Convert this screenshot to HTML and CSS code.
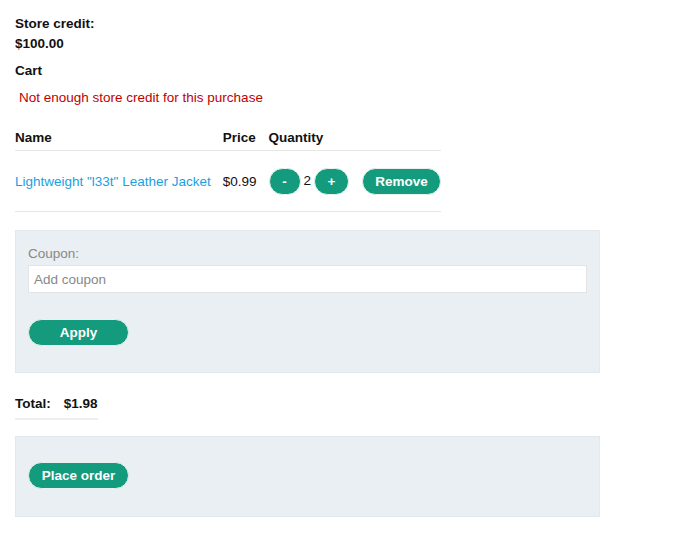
FILE: index.html
```html
<!DOCTYPE html>
<html>
<head>
<meta charset="utf-8">
<link rel="stylesheet" href="styles.css">
</head>
<body>
<div class="page">
  <div class="credit">
    <div class="label">Store credit:</div>
    <div class="label">$100.00</div>
  </div>
  <h3 class="cart-title">Cart</h3>
  <p class="error">Not enough store credit for this purchase</p>
  <table class="cart">
    <thead>
      <tr><th>Name</th><th>Price</th><th>Quantity</th><th></th></tr>
    </thead>
    <tbody>
      <tr>
        <td><a href="#" class="product">Lightweight "l33t" Leather Jacket</a></td>
        <td>$0.99</td>
        <td class="qty"><button class="btn small">-</button><span class="count">2</span><button class="btn small plus">+</button></td>
        <td><button class="btn remove">Remove</button></td>
      </tr>
    </tbody>
  </table>
  <form class="panel coupon">
    <label class="coupon-label">Coupon:</label>
    <input class="coupon-input" type="text" placeholder="Add coupon">
    <button type="button" class="btn wide">Apply</button>
  </form>
  <table class="total">
    <tr><th>Total:</th><th>$1.98</th></tr>
  </table>
  <div class="panel order">
    <button class="btn wide">Place order</button>
  </div>
</div>
</body>
</html>
```

FILE: styles.css
```css
* { box-sizing: border-box; }
body {
  margin: 0;
  font-family: "Liberation Sans", Arial, sans-serif;
  font-size: 13.5px;
  color: #111;
  background: #fff;
}
.page {
  padding: 14px 15px;
  width: 614px;
}
.credit .label {
  font-weight: bold;
  line-height: 20px;
}
.cart-title {
  margin: 7px 0 0;
  font-size: 13.5px;
  line-height: 20px;
}
.error {
  margin: 7px 0 0 4px;
  color: #c00000;
  font-size: 13.5px;
  line-height: 20px;
}
.cart {
  border-collapse: collapse;
  margin-top: 18px;
}
.cart th {
  text-align: left;
  font-weight: bold;
  padding: 4px 12px 4px 0;
  line-height: 16px;
  border-bottom: 1px solid #e6e6e6;
}
.cart td {
  padding: 17px 12px 16px 0;
  border-bottom: 1px solid #e6e6e6;
  vertical-align: middle;
}
.cart th:nth-child(3), .cart td:nth-child(3) { padding-right: 13px; }
.cart th:last-child, .cart td:last-child { padding-right: 0; }
.product {
  color: #1a9fe0;
  text-decoration: none;
}
.qty { white-space: nowrap; }
.count { margin: 0 3px; }
.btn {
  font-family: "Liberation Sans", Arial, sans-serif;
  font-weight: bold;
  font-size: 13.5px;
  color: #fff;
  background: #149a7c;
  border: 1px solid #e9f2ef;
  border-radius: 14px;
  height: 27px;
  padding: 0 12px;
  cursor: pointer;
  vertical-align: middle;
}
.btn.small { width: 32px; padding: 0; }
.btn.plus { width: 35px; }
.remove { width: 79px; padding: 0; }
.btn.wide { width: 101px; padding: 0; }
.panel {
  background: #e9eff2;
  border: 1px solid #e2e8eb;
  width: 585px;
  padding: 0 12px;
}
.coupon {
  margin: 18px 0 0;
  padding-top: 15px;
  padding-bottom: 26px;
}
.coupon-label {
  display: block;
  color: #888;
  font-size: 13.5px;
  line-height: 16px;
}
.coupon-input {
  display: block;
  width: 559px;
  height: 28px;
  margin-top: 3px;
  border: 1px solid #e4e4e4;
  background: #fff;
  font-family: "Liberation Sans", Arial, sans-serif;
  font-size: 13.5px;
  padding: 0 5px;
  color: #333;
}
.coupon-input::placeholder { color: #888; }
.coupon .btn { margin-top: 26px; }
.total {
  border-collapse: collapse;
  margin-top: 23px;
}
.total th {
  text-align: left;
  padding: 0 13px 6px 0;
  line-height: 16px;
  border-bottom: 2px solid #eeeeee;
}
.total th:last-child { padding-right: 0; }
.order {
  margin-top: 16px;
  padding-top: 25px;
  padding-bottom: 27px;
}
```
